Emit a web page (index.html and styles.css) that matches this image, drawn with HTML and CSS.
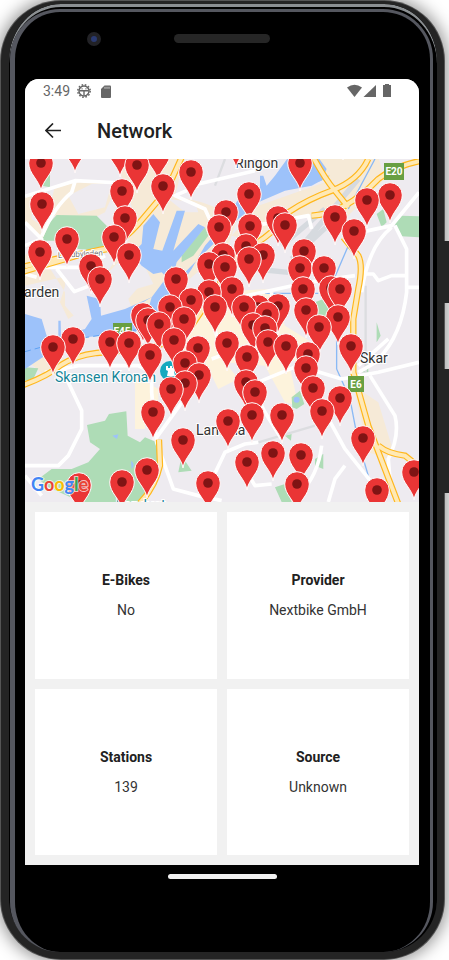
FILE: index.html
```html
<!DOCTYPE html>
<html lang="en">
<head>
<meta charset="utf-8">
<meta name="viewport" content="width=device-width, initial-scale=1">
<title>Network</title>
<link rel="stylesheet" href="styles.css">
</head>
<body>
<div class="phone">
  <span class="side-key power"></span>
  <span class="side-key volume"></span>
  <div class="bezel">
    <div class="forehead">
      <span class="camera"></span>
      <span class="speaker"></span>
    </div>
    <div class="screen">
      <div class="status">
        <span class="time">3:49</span>
        <svg class="gear" width="14" height="14" viewBox="0 0 14 14" aria-hidden="true">
          <circle cx="7" cy="7" r="6.200" fill="none" stroke="#666" stroke-width="1.500" stroke-dasharray="1.600 1.650"/>
          <circle cx="7" cy="7" r="5" fill="none" stroke="#666" stroke-width="1.500"/>
          <path d="M2.500 6.800h9M7 7v4.500M4.600 4.800h.9M8.500 4.800h.9" stroke="#666" stroke-width="1.400"/>
        </svg>
        <svg width="10" height="13" viewBox="0 0 10 13" aria-hidden="true">
          <path d="M3.500.5H9q1 0 1 1V12q0 1-1 1H1q-1 0-1-1V4z" fill="#666"/>
          <path d="M4 1.800v2M6 1.800v2M8 1.800v2" stroke="#ccc" stroke-width="1"/>
        </svg>
        <span class="spacer"></span>
        <svg width="44" height="14" viewBox="0 0 44 14" aria-hidden="true">
          <path d="M0 3.400Q7.500-2 15 3.400L7.500 13z" fill="#666"/>
          <path d="M29 1v12H16.500z" fill="#666"/>
          <path d="M38 0h4v1h2v12h-8V1h2z" fill="#666"/>
        </svg>
      </div>
      <header class="appbar">
        <button class="back" type="button" aria-label="Back">
          <svg width="16" height="16" viewBox="0 0 16 16" aria-hidden="true"><path d="M16 7.500H1.500M8 .5l-7 7 7 7" fill="none" stroke="#222" stroke-width="1.700"/></svg>
        </button>
        <h1>Network</h1>
      </header>
      <svg class="map" viewBox="25 159 394 343" role="img" aria-label="Map of bike stations">
        <defs>
          <g id="pin">
            <path d="M0 28C-1.500 17-12.300 11-12.300 0A12.300 12.300 0 0 1 12.300 0C12.300 11 1.500 17 0 28z" fill="#ea3535" stroke="#fff" stroke-width="1"/>
            <circle r="4.800" fill="#7f1414"/>
          </g>
          <g id="highways">
            <path d="M-5 338Q60 318 130 298Q200 275 250 268M0 322q120-30 170-38l80-14"/>
            <path d="M250 272Q300 240 340 195L425 95l45-100"/>
            <path d="M-5 678Q70 650 105 620Q150 590 215 582L340 570Q440 560 500 500L560 410L640 290L720 235L800 170"/>
            <path d="M865-5Q900 60 930 95L970 145M955 235L1000 290Q1015 320 1000 390L985 480V640L1030 800L1120 1035"/>
            <path d="M1190 5Q1110 20 1060 60Q960 165 860 170M1030 0Q1000 65 920 95Q850 120 790 160"/>
            <path d="M1060 860Q1090 885 1140 890L1190 930M402 842L405 920Q390 985 345 1032"/>
          </g>
        </defs>
        <rect x="25" y="159" width="394" height="343" fill="#eeebf0"/>
        <g transform="translate(25 159) scale(.3333)">
          <g fill="#f6ead7">
            <path d="M0 110L70 95L150 70H280L240 160L200 180L80 170L60 240L90 290L70 320L120 400L190 440L130 480L105 430L130 350L0 380V290L50 240L0 190z"/>
            <path d="M270-5H480L450 110L530 130L640 170L610 260L470 380L440 500L380 440L330 470L310 420L370 350L240 350L340 200z"/>
            <path d="M770-5H1060L1080 60L960 180L840 170L700 250L620 230L700 140L900 70z"/>
            <path d="M0 600L60 560L120 600L60 650zM985 680L1060 730L1100 860L1090 900L1030 880z"/>
          </g>
          <path d="M480 470L540 400L740 390L780 500L860 550L820 610L790 600L820 740L780 730L720 620L600 610L640 660L580 690L540 610L440 590zM330 650L400 690V730L360 740V810H330z" fill="#fdf3dc"/>
          <g fill="#eeebf0">
            <path d="M20 100L90 80L60 205L20 180zM130 110L200 75H260L240 145L160 165zM540 80L740 20L800 0H500zM240 350L330 260L385 375L300 400zM120 330L210 300L260 480L190 520L120 440z"/>
            <path d="M430 120l80 10 10 30-40 0zM800 200l70-40 20 10-70 80z"/>
          </g>
          <g fill="#aedcb6">
            <path d="M75 190L95 168L215 170L245 200L240 240L290 250L270 280L160 270L120 245H50z"/>
            <path d="M540 205L550 230L505 290L470 310L470 290L500 250zM1110 195L1130 170L1182 172V235L1130 232zM1055 165L1075 150L1085 190L1070 205z"/>
            <path d="M186 798L240 785L252 765L304 757L308 830L345 850L360 835L395 850L400 950L350 1030H170L70 985L40 960L80 930L140 930L190 910L225 870L195 850z"/>
            <path d="M870 430L920 410V500L900 520L870 480zM800 715L825 695L838 735L815 750L802 745zM780 830L800 825L798 845zM870 900L895 885V930L870 920zM750 985L780 975L800 1029H770zM1000 640L1030 615V640zM1055 490l12 40-12 20z"/>
            <path d="M0 625L40 628L25 660L0 665zM50 80L75 40V85zM470 890l30 45-40 5z"/>
          </g>
          <g fill="#9dc2fa">
            <path d="M0 465L50 480L65 530L100 540L100 485L107 485L108 530L180 510L200 480L185 410L225 420L228 470L300 450L380 415L425 355L410 340L385 345L350 320L320 285L350 255L355 200L385 165L405 190L385 270L412 275L455 155L480 155L445 275L520 195L540 205L455 310L445 350L480 340L560 260L640 180L700 130L780 95L860 80L915 50L860 50V-5H790L750 50L725 80L715 50H705V90L640 120L600 190L540 260L500 330L440 420L385 480L330 520L130 540L60 590L0 630z"/>
            <path d="M760 90V60L830 20L880-5L905 30L890 65L800 90z"/>
            <circle cx="815" cy="722" r="9"/>
            <path d="M262 830l18-4-4 14zM318 905q15 10 2 25z"/>
          </g>
          <path d="M330 465L345 435L380 415L370 450zM425 350L440 320L465 350L445 390z" fill="#f6ead7"/>
          <g fill="none" stroke="#5da2f3" stroke-width="3" stroke-dasharray="18 12">
            <path d="M0 578L120 545L350 510"/>
          </g>
          <g fill="none" stroke="#d6dadf" stroke-width="16">
            <path d="M770 260L900 150M800 300L930 180M690 330L790 340M840 250L1000 60"/>
          </g>
          <g fill="none" stroke="#dcdde0" stroke-width="7">
            <path d="M1022 380V640M700 850L870 800M600 0L570 80"/>
          </g>
          <g fill="none" stroke="#8ab9f5" stroke-width="4">
            <path d="M970 260L910 400M720 403H880M935 530V630L975 720L1000 850L1030 950M1050 0L970 150"/>
          </g>
          <g fill="none" stroke="#fff" stroke-width="11" stroke-linejoin="round">
            <path d="M0 112L150 65L290 72M150 68L140 100Q90 140 50 232M0 190L50 240L0 260M0 345L35 355M60 325H180L240 290M95 330L148 398L195 380M290 80L285 130M520 80L450 110L540 150L590 260M520 75L690 35"/>
            <path d="M60 640L160 620H340L380 640V700L395 850L420 920L445 990L520 1010L590 1025M125 660L170 755V810L130 890L100 920H0M0 950L50 1010"/>
            <path d="M550 985L600 880L660 855L700 850M395 835L500 690M740 975L690 980L660 930M650 690L820 620L950 660L1060 640L1182 610M680 680L720 760L770 840"/>
            <path d="M900 760L960 870L1040 970M890 860Q880 950 820 1010M1035 650L1110 770Q1125 830 1090 900L1095 960M960 920L930 960L910 1029"/>
            <path d="M960 230L1100 200L1182 100M1100 205Q1030 260 1010 400M1110 200L1145 270V400Q1130 530 1060 600M1015 345L1045 345L1060 365L1100 350H1145M1145 385H1182M1000 620L1090 540M1070 600L1000 640"/>
            <path d="M620 420L850 370L990 350M740 400V440M690 200L850 170L860 210M560 600L720 540M590 580L560 480"/>
          </g>
          <use href="#highways" fill="none" stroke="#ffb71c" stroke-width="19"/>
          <use href="#highways" fill="none" stroke="#ffe9b5" stroke-width="12"/>
        </g>
        <g fill="#689f42">
          <rect x="384" y="163" width="20" height="17"/>
          <rect x="113" y="323" width="19" height="15"/>
          <rect x="348" y="376" width="16" height="16"/>
        </g>
        <g class="shield">
          <text x="394" y="175">E20</text>
          <text x="122" y="335">E45</text>
          <text x="356" y="388">E6</text>
        </g>
        <circle cx="170" cy="371" r="10" fill="#15a9bf"/>
        <path d="M166 366v4l2 1-1 5h8l-1-5 2-1v-4h-2v2h-2v-2h-2v2h-2v-2z" fill="#fff"/>
        <g class="place">
          <text x="235" y="168">Ringon</text>
          <text x="24" y="297">arden</text>
          <text x="360" y="363">Skar</text>
          <text x="196" y="435">Landala</text>
          <text class="poi" x="116" y="510">Landvet</text>
          <text class="poi" x="55" y="382">Skansen Kronan</text>
          <text class="street" x="58" y="258" transform="rotate(-3 58 258)">Lundbyleden</text>
        </g>
        <g>
          <use href="#pin" x="236" y="140"/><use href="#pin" x="343" y="132"/><use href="#pin" x="75" y="145"/><use href="#pin" x="120" y="149"/><use href="#pin" x="158" y="153"/>
          <use href="#pin" x="41" y="163"/><use href="#pin" x="300" y="163"/><use href="#pin" x="137" y="165"/><use href="#pin" x="191" y="172"/><use href="#pin" x="163" y="186"/>
          <use href="#pin" x="122" y="191"/><use href="#pin" x="249" y="194"/><use href="#pin" x="390" y="195"/><use href="#pin" x="367" y="200"/><use href="#pin" x="42" y="204"/>
          <use href="#pin" x="226" y="212"/><use href="#pin" x="335" y="217"/><use href="#pin" x="278" y="218"/><use href="#pin" x="125" y="218"/><use href="#pin" x="285" y="225"/>
          <use href="#pin" x="250" y="226"/><use href="#pin" x="219" y="227"/><use href="#pin" x="354" y="231"/><use href="#pin" x="114" y="237"/><use href="#pin" x="67" y="239"/>
          <use href="#pin" x="246" y="246"/><use href="#pin" x="304" y="251"/><use href="#pin" x="40" y="252"/><use href="#pin" x="129" y="255"/><use href="#pin" x="223" y="255"/>
          <use href="#pin" x="263" y="255"/><use href="#pin" x="249" y="259"/><use href="#pin" x="209" y="264"/><use href="#pin" x="91" y="266"/><use href="#pin" x="225" y="267"/>
          <use href="#pin" x="300" y="268"/><use href="#pin" x="324" y="268"/><use href="#pin" x="176" y="279"/><use href="#pin" x="100" y="279"/><use href="#pin" x="331" y="288"/>
          <use href="#pin" x="232" y="289"/><use href="#pin" x="303" y="289"/><use href="#pin" x="340" y="289"/><use href="#pin" x="209" y="292"/><use href="#pin" x="191" y="300"/>
          <use href="#pin" x="278" y="306"/><use href="#pin" x="170" y="307"/><use href="#pin" x="258" y="307"/><use href="#pin" x="215" y="307"/><use href="#pin" x="244" y="307"/>
          <use href="#pin" x="306" y="310"/><use href="#pin" x="267" y="314"/><use href="#pin" x="143" y="315"/><use href="#pin" x="338" y="317"/><use href="#pin" x="184" y="319"/>
          <use href="#pin" x="148" y="320"/><use href="#pin" x="159" y="324"/><use href="#pin" x="253" y="325"/><use href="#pin" x="319" y="327"/><use href="#pin" x="265" y="328"/>
          <use href="#pin" x="73" y="339"/><use href="#pin" x="174" y="340"/><use href="#pin" x="110" y="342"/><use href="#pin" x="268" y="342"/><use href="#pin" x="129" y="343"/>
          <use href="#pin" x="227" y="343"/><use href="#pin" x="286" y="346"/><use href="#pin" x="351" y="346"/><use href="#pin" x="53" y="347"/><use href="#pin" x="198" y="348"/>
          <use href="#pin" x="308" y="354"/><use href="#pin" x="150" y="355"/><use href="#pin" x="247" y="357"/><use href="#pin" x="185" y="363"/><use href="#pin" x="306" y="368"/>
          <use href="#pin" x="199" y="375"/><use href="#pin" x="246" y="382"/><use href="#pin" x="185" y="383"/><use href="#pin" x="313" y="388"/><use href="#pin" x="171" y="389"/>
          <use href="#pin" x="255" y="392"/><use href="#pin" x="340" y="398"/><use href="#pin" x="322" y="411"/><use href="#pin" x="153" y="412"/><use href="#pin" x="282" y="415"/>
          <use href="#pin" x="252" y="415"/><use href="#pin" x="228" y="421"/><use href="#pin" x="363" y="438"/><use href="#pin" x="183" y="440"/><use href="#pin" x="273" y="453"/>
          <use href="#pin" x="301" y="455"/><use href="#pin" x="247" y="462"/><use href="#pin" x="147" y="470"/><use href="#pin" x="414" y="472"/><use href="#pin" x="122" y="482"/>
          <use href="#pin" x="208" y="483"/><use href="#pin" x="297" y="484"/><use href="#pin" x="79" y="485"/><use href="#pin" x="377" y="490"/>
        </g>
        <text class="google" x="31" y="491"><tspan fill="#4285f4">G</tspan><tspan fill="#ea4335">o</tspan><tspan fill="#fbbc05">o</tspan><tspan fill="#4285f4">g</tspan><tspan fill="#34a853">l</tspan><tspan fill="#ea4335">e</tspan></text>
      </svg>
      <main class="cards">
        <section class="card"><h2>E-Bikes</h2><p>No</p></section>
        <section class="card"><h2>Provider</h2><p>Nextbike GmbH</p></section>
        <section class="card"><h2>Stations</h2><p>139</p></section>
        <section class="card"><h2>Source</h2><p>Unknown</p></section>
      </main>
    </div>
    <div class="chin"><span class="home"></span></div>
  </div>
</div>
</body>
</html>
```
FILE: styles.css
```css
* { box-sizing: border-box; }

body {
  margin: 0;
  display: flex;
  min-height: 100vh;
  background: #fff;
  font-family: Roboto, "Liberation Sans", sans-serif;
  color: #212121;
}

.phone {
  position: relative;
  flex: 1;
  display: flex;
  margin: 1px 5px 1px 1px;
  padding: 5px 4px 0 1px;
  border: solid #242424;
  border-width: 3px 7px 7px 8px;
  border-radius: 60px;
  background: #000;
  box-shadow: inset 0 3px 0 #8b8f92, 0 0 0 1px #555, 0 0 16px 4px #999;
}

.side-key {
  position: absolute;
  right: -12px;
  width: 5px;
  background: #242424;
}

.power { top: 237px; height: 62px; }
.volume { top: 365px; height: 124px; }

.bezel {
  flex: 1;
  display: flex;
  flex-direction: column;
  padding: 0 11px 0 10px;
  border: solid #55575f;
  border-width: 3px 3px 0 5px;
  border-radius: 50px;
}

.forehead {
  position: relative;
  display: flex;
  justify-content: center;
  height: 67px;
  padding-top: 22px;
}

.camera {
  position: absolute;
  top: 20px;
  left: 62px;
  width: 14px;
  height: 14px;
  border: 4px solid #222226;
  border-radius: 50%;
  background: #2a3a72;
}

.speaker {
  width: 96px;
  height: 9px;
  border-radius: 5px;
  background: #262626;
}

.screen {
  flex: 1;
  display: flex;
  flex-direction: column;
  overflow: hidden;
  border-radius: 14px 14px 0 0;
  background: #f1f1f1;
}

.status {
  display: flex;
  align-items: center;
  gap: 10px;
  height: 24px;
  padding: 0 28px 0 18px;
  background: #fff;
  color: #666;
  font-size: 14px;
}

.gear { margin-left: -3px; }
.spacer { flex: 1; }

.appbar {
  display: flex;
  align-items: center;
  gap: 28px;
  height: 56px;
  padding: 0 12px;
  background: #fff;
}

.back {
  display: grid;
  place-items: center;
  width: 32px;
  height: 32px;
  padding: 0;
  border: 0;
  background: none;
}

h1 {
  margin: 0;
  font-size: 20px;
  font-weight: 500;
}

.map {
  display: block;
  width: 100%;
  height: auto;
}

.place {
  font-size: 14px;
  fill: #333;
  stroke: #fff;
  stroke-width: 2px;
  paint-order: stroke;
}

.place .poi { fill: #138599; }
.place .street { font-size: 8px; fill: #777; }

.shield {
  font-size: 10px;
  font-weight: 700;
  text-anchor: middle;
  fill: #fff;
}

.google {
  font-family: Lato, sans-serif;
  font-size: 18px;
  font-weight: 700;
  stroke: #fff;
  stroke-opacity: .7;
  stroke-width: 2px;
  paint-order: stroke;
}

.cards {
  flex: 1;
  display: grid;
  grid-template-columns: 1fr 1fr;
  grid-auto-rows: 1fr;
  gap: 10px;
  padding: 10px;
}

.card {
  display: flex;
  flex-direction: column;
  align-items: center;
  justify-content: center;
  gap: 10px;
  background: #fff;
  font-size: 14px;
  line-height: 20px;
}

.card h2,
.card p {
  margin: 0;
  font-size: inherit;
}

.card p { color: #333; }

.chin {
  display: flex;
  justify-content: center;
  height: 87px;
  padding-top: 9px;
}

.home {
  width: 109px;
  height: 5px;
  border-radius: 3px;
  background: #f1f1f1;
}
```
